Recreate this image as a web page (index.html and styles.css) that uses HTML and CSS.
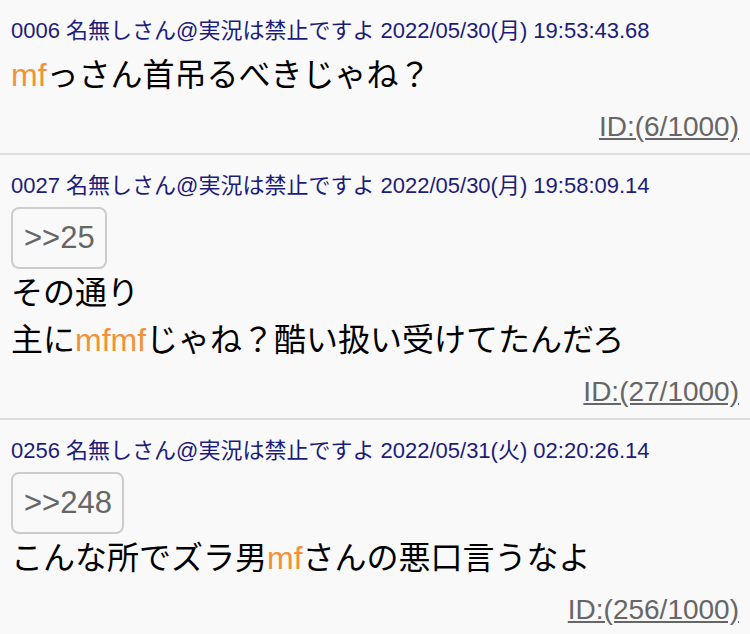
FILE: index.html
```html
<!DOCTYPE html>
<html lang="ja">
<head>
    <meta charset="UTF-8">
    <meta name="viewport" content="width=device-width, initial-scale=1.0">
    <title>スレッド</title>
    <link rel="stylesheet" href="styles.css">
</head>
<body>
    <main class="thread">
        <article class="res">
            <div class="res__head">0006 名無しさん@実況は禁止ですよ 2022/05/30(月) 19:53:43.68</div>
            <div class="res__body">
                <p><span class="hl">mf</span>っさん首吊るべきじゃね？</p>
            </div>
            <div class="res__foot"><a href="#" class="res__id">ID:(6/1000)</a></div>
        </article>
        <article class="res">
            <div class="res__head">0027 名無しさん@実況は禁止ですよ 2022/05/30(月) 19:58:09.14</div>
            <div class="res__anchor"><a href="#">&gt;&gt;25</a></div>
            <div class="res__body">
                <p>その通り</p>
                <p>主に<span class="hl">mfmf</span>じゃね？酷い扱い受けてたんだろ</p>
            </div>
            <div class="res__foot"><a href="#" class="res__id">ID:(27/1000)</a></div>
        </article>
        <article class="res">
            <div class="res__head">0256 名無しさん@実況は禁止ですよ 2022/05/31(火) 02:20:26.14</div>
            <div class="res__anchor"><a href="#">&gt;&gt;248</a></div>
            <div class="res__body">
                <p>こんな所でズラ男<span class="hl">mf</span>さんの悪口言うなよ</p>
            </div>
            <div class="res__foot"><a href="#" class="res__id">ID:(256/1000)</a></div>
        </article>
    </main>
</body>
</html>
```

FILE: styles.css
```css
body {
    margin: 0;
    background-color: #f9f9f9;
    font-family: "Liberation Sans", "Noto Sans CJK JP", sans-serif;
    color: #000;
}
.res {
    padding: 16px 11px 6px;
    border-bottom: 2px #ddd solid;
}
.res__head {
    font-size: 22px;
    line-height: 30px;
    color: #1c1c7a;
    white-space: nowrap;
}
.res__anchor {
    margin-top: 6px;
    height: 62px;
}
.res__anchor a {
    display: inline-block;
    height: 58px;
    line-height: 58px;
    padding: 0 10px 0 11px;
    border: 2px #ccc solid;
    border-radius: 8px;
    font-size: 31px;
    color: #666;
    text-decoration: none;
}
.res__body {
    margin-top: 6px;
    font-size: 32px;
    line-height: 47px;
}
.res__anchor + .res__body {
    margin-top: 1px;
}
.res__body p {
    margin: 0;
}
.hl {
    color: #f29238;
}
.res__foot {
    margin-top: 8px;
    height: 40px;
    font-size: 28px;
    line-height: 40px;
    text-align: right;
}
.res__id {
    color: #666;
}
```
